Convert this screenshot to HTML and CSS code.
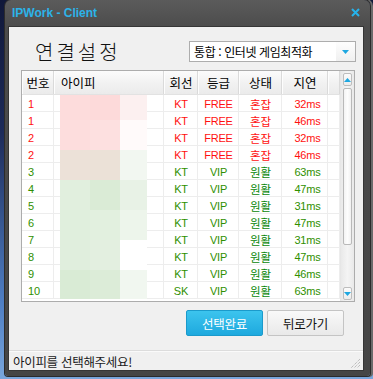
FILE: index.html
```html
<!DOCTYPE html>
<html lang="ko">
<head>
<meta charset="utf-8">
<title>IPWork - Client</title>
<link rel="stylesheet" href="styles.css">
</head>
<body>
<div class="window">
  <div class="titlebar">
    <span class="title">IPWork - Client</span>
    <svg class="close" width="9" height="9" viewBox="0 0 9 9"><path d="M1 1 L8 8 M8 1 L1 8" stroke="#27b2ea" stroke-width="2" fill="none"/></svg>
  </div>
  <div class="panel">
    <div class="top">
      <h1 class="heading">연결설정</h1>
      <div class="combo">
        <span class="combo-text">통합 : 인터넷 게임최적화</span>
        <span class="combo-btn"><svg width="7" height="4" viewBox="0 0 7 4"><path d="M0 0 H7 L3.5 4 Z" fill="#1ea7e0"/></svg></span>
      </div>
    </div>
    <div class="list">
      <div class="list-main">
        <div class="row head">
          <span class="c c1 hc">번호</span>
          <span class="c c2 hl">아이피</span>
          <span class="c c3 hc">회선</span>
          <span class="c c4 hc">등급</span>
          <span class="c c5 hc">상태</span>
          <span class="c c6 hc">지연</span>
          <span class="c c7"></span>
        </div>
        <div class="body">
          <div class="row red"><span class="c c1 num">1</span><span class="c c2"></span><span class="c c3 lat">KT</span><span class="c c4 lat">FREE</span><span class="c c5 ko">혼잡</span><span class="c c6 lat">32ms</span><span class="c c7"></span></div>
          <div class="row red"><span class="c c1 num">1</span><span class="c c2"></span><span class="c c3 lat">KT</span><span class="c c4 lat">FREE</span><span class="c c5 ko">혼잡</span><span class="c c6 lat">46ms</span><span class="c c7"></span></div>
          <div class="row red"><span class="c c1 num">2</span><span class="c c2"></span><span class="c c3 lat">KT</span><span class="c c4 lat">FREE</span><span class="c c5 ko">혼잡</span><span class="c c6 lat">32ms</span><span class="c c7"></span></div>
          <div class="row red"><span class="c c1 num">2</span><span class="c c2"></span><span class="c c3 lat">KT</span><span class="c c4 lat">FREE</span><span class="c c5 ko">혼잡</span><span class="c c6 lat">46ms</span><span class="c c7"></span></div>
          <div class="row green"><span class="c c1 num">3</span><span class="c c2"></span><span class="c c3 lat">KT</span><span class="c c4 lat">VIP</span><span class="c c5 ko">원활</span><span class="c c6 lat">63ms</span><span class="c c7"></span></div>
          <div class="row green"><span class="c c1 num">4</span><span class="c c2"></span><span class="c c3 lat">KT</span><span class="c c4 lat">VIP</span><span class="c c5 ko">원활</span><span class="c c6 lat">47ms</span><span class="c c7"></span></div>
          <div class="row green"><span class="c c1 num">5</span><span class="c c2"></span><span class="c c3 lat">KT</span><span class="c c4 lat">VIP</span><span class="c c5 ko">원활</span><span class="c c6 lat">31ms</span><span class="c c7"></span></div>
          <div class="row green"><span class="c c1 num">6</span><span class="c c2"></span><span class="c c3 lat">KT</span><span class="c c4 lat">VIP</span><span class="c c5 ko">원활</span><span class="c c6 lat">47ms</span><span class="c c7"></span></div>
          <div class="row green"><span class="c c1 num">7</span><span class="c c2"></span><span class="c c3 lat">KT</span><span class="c c4 lat">VIP</span><span class="c c5 ko">원활</span><span class="c c6 lat">31ms</span><span class="c c7"></span></div>
          <div class="row green"><span class="c c1 num">8</span><span class="c c2"></span><span class="c c3 lat">KT</span><span class="c c4 lat">VIP</span><span class="c c5 ko">원활</span><span class="c c6 lat">47ms</span><span class="c c7"></span></div>
          <div class="row green"><span class="c c1 num">9</span><span class="c c2"></span><span class="c c3 lat">KT</span><span class="c c4 lat">VIP</span><span class="c c5 ko">원활</span><span class="c c6 lat">46ms</span><span class="c c7"></span></div>
          <div class="row green"><span class="c c1 num">10</span><span class="c c2"></span><span class="c c3 lat">SK</span><span class="c c4 lat">VIP</span><span class="c c5 ko">원활</span><span class="c c6 lat">63ms</span><span class="c c7"></span></div>
          <div class="mosaic">
            <i class="m a1"></i><i class="m a2"></i><i class="m a3"></i>
            <i class="m b1"></i><i class="m b2"></i><i class="m b3"></i>
            <i class="m c1m"></i><i class="m c2m"></i><i class="m c3m"></i>
            <i class="m d1"></i><i class="m d2"></i><i class="m d3"></i>
            <i class="m e1"></i><i class="m e2"></i><i class="m e3"></i>
            <i class="m f1"></i><i class="m f2"></i><i class="m f3"></i>
            <i class="m g1"></i><i class="m g2"></i><i class="m g3"></i>
          </div>
        </div>
      </div>
      <div class="vscroll">
        <div class="sbtn"><svg width="7" height="4" viewBox="0 0 7 4"><path d="M0 4 H7 L3.5 0 Z" fill="#1ea7e0"/></svg></div>
        <div class="thumb"></div>
        <div class="sbtn"><svg width="7" height="4" viewBox="0 0 7 4"><path d="M0 0 H7 L3.5 4 Z" fill="#1ea7e0"/></svg></div>
      </div>
    </div>
    <div class="buttons">
      <button class="btn primary">선택완료</button>
      <button class="btn">뒤로가기</button>
    </div>
    <div class="status">
      <span class="status-text">아이피를 선택해주세요!</span>
      <svg class="grip" width="11" height="11" viewBox="0 0 11 11">
        <path d="M10 1 L1 10 M10 4 L4 10 M10 7 L7 10" stroke="#a8a8a8" stroke-width="1" stroke-dasharray="1 1" fill="none"/>
      </svg>
    </div>
  </div>
</div>
</body>
</html>
```

FILE: styles.css
```css
* { box-sizing: border-box; }

body {
  margin: 0;
  width: 373px;
  height: 379px;
  overflow: hidden;
  background: linear-gradient(180deg, #10183a 0%, #1d2b5a 35%, #4f7fc4 80%, #79a6dc 100%);
  font-family: "Noto Sans CJK KR", "Noto Sans", sans-serif;
}

.window {
  margin-left: 5px;
  width: 365px;
  height: 376px;
  background: linear-gradient(180deg, #5b5b5b 0, #4c4c4c 27px, #454545 100%);
  border-radius: 6px 6px 3px 3px;
  box-shadow: 0 0 0 1px #2b2b2b, 2px 0 0 1px #6a6a6a;
  display: flex;
  flex-direction: column;
}

.titlebar {
  height: 27px;
  display: flex;
  align-items: center;
  justify-content: space-between;
  padding: 0 10px 2px 7px;
}

.title {
  font: bold 12px "Liberation Sans", Arial, sans-serif;
  color: #2cb3e9;
}

.close { display: block; }

.panel {
  margin-left: 4px;
  width: 354px;
  height: 343px;
  background: #f0f0f0;
  box-shadow: 0 0 0 1px #363636;
  display: flex;
  flex-direction: column;
}

.top {
  height: 43px;
  display: flex;
  justify-content: space-between;
  align-items: flex-start;
  padding: 13px 7px 0 26px;
}

.heading {
  margin: 0;
  font-size: 20px;
  font-weight: 300;
  line-height: 24px;
  letter-spacing: 3px;
  color: #111;
}

.combo {
  margin-top: 1px;
  width: 167px;
  height: 21px;
  background: #fff;
  border: 1px solid #adadad;
  display: flex;
  align-items: center;
  justify-content: space-between;
}

.combo-text {
  padding-left: 4px;
  font-size: 12px;
  letter-spacing: -0.4px;
  color: #000;
  line-height: 19px;
}

.combo-btn {
  width: 19px;
  height: 19px;
  display: flex;
  align-items: center;
  justify-content: center;
  background: linear-gradient(180deg, #fdfdfd, #f0f0f0);
}

.list {
  margin: 0 8px 0 12px;
  height: 232px;
  border: 1px solid #acacac;
  background: #fff;
  display: flex;
}

.list-main {
  width: 318px;
  display: flex;
  flex-direction: column;
}

.row {
  display: grid;
  grid-template-columns: 32px 110px 34px 41px 43px 46px 12px;
  height: 17px;
}

.row.head {
  height: 24px;
  background: linear-gradient(180deg, #fbfbfb 0%, #f1f1f1 55%, #ebebeb 100%);
  border-bottom: 1px solid #e2e2e2;
}

.c {
  display: flex;
  align-items: center;
  white-space: nowrap;
  box-shadow: inset -1px -1px 0 #ededed;
}

.head .c {
  box-shadow: inset -1px 0 0 #dadada, inset 1px 0 0 #fdfdfd;
  font-size: 12.5px;
  color: #000;
}

.head .hc { justify-content: center; }
.head .hl { padding-left: 7px; }

.body {
  position: relative;
  flex: 1;
}

.num {
  padding-left: 6px;
  font: 11px "Liberation Sans", Arial, sans-serif;
}

.lat {
  justify-content: center;
  font: 11px "Liberation Sans", Arial, sans-serif;
  letter-spacing: -0.2px;
}

.c6.lat { padding-left: 5px; }

.ko {
  justify-content: center;
  font-size: 11.5px;
}

.red .c { color: #ff1010; }
.green .c { color: #0a870a; }
.green .lat, .green .num { color: #2f8f00; }

.mosaic {
  position: absolute;
  left: 38px;
  top: 0;
  width: 87px;
  display: grid;
  grid-template-columns: 30px 30px 27px;
  grid-template-rows: 25px 30px 30px 30px 30px 30px 29px;
}

.m { display: block; }
.a1 { background: #fddcdc; } .a2 { background: #fddada; } .a3 { background: #fcf0f0; }
.b1 { background: #fddddd; } .b2 { background: #fde0e0; } .b3 { background: #fffafa; }
.c1m { background: #ece1d8; } .c2m { background: #ebe1d7; } .c3m { background: #f2f7f1; }
.d1 { background: #e1efde; } .d2 { background: #daebd6; } .d3 { background: #e8f2e6; }
.e1 { background: #e0efdd; } .e2 { background: #e2f0df; } .e3 { background: #edf5eb; }
.f1 { background: #e0eedd; } .f2 { background: #e3efe0; } .f3 { background: #ffffff; }
.g1 { background: #d9ebd5; } .g2 { background: #dcecd8; } .g3 { background: #f1f7f0; }

.vscroll {
  width: 14px;
  padding: 2px 2px 1px;
  display: flex;
  flex-direction: column;
  gap: 2px;
  background: linear-gradient(90deg, #e9e9e9, #f4f4f4 50%, #e9e9e9);
  border-left: 1px solid #e6e6e6;
}

.sbtn {
  height: 13px;
  border: 1px solid #bdbdbd;
  border-radius: 2px;
  background: linear-gradient(180deg, #fbfbfb, #ececec);
  display: flex;
  align-items: center;
  justify-content: center;
}

.thumb {
  height: 157px;
  border: 1px solid #b9b9b9;
  border-radius: 2px;
  background: linear-gradient(90deg, #f3f3f3, #fdfdfd 50%, #f1f1f1);
  margin-bottom: auto;
}

.buttons {
  margin-top: 8px;
  height: 26px;
  display: flex;
  justify-content: flex-end;
  gap: 4px;
  padding-right: 19px;
}

.btn {
  width: 77px;
  height: 26px;
  padding: 0;
  font-family: "Noto Sans CJK KR", sans-serif;
  font-size: 12.5px;
  letter-spacing: -0.3px;
  color: #111;
  border: 1px solid #c4c4c4;
  border-radius: 2px;
  background: linear-gradient(180deg, #f9f9f9, #e9e9e9);
}

.btn.primary {
  color: #fff;
  border-color: #1b9acb;
  background: linear-gradient(180deg, #3cc4ee, #1ea9de);
}

.status {
  margin-top: 14px;
  height: 20px;
  border-top: 1px solid #dcdcdc;
  box-shadow: inset 0 1px 0 #fafafa;
  display: flex;
  align-items: center;
  justify-content: space-between;
  padding: 1px 2px 0 4px;
}

.status-text {
  font-size: 12.5px;
  letter-spacing: -0.3px;
  color: #1a1a1a;
}

.grip { display: block; margin-top: 4px; }
```
